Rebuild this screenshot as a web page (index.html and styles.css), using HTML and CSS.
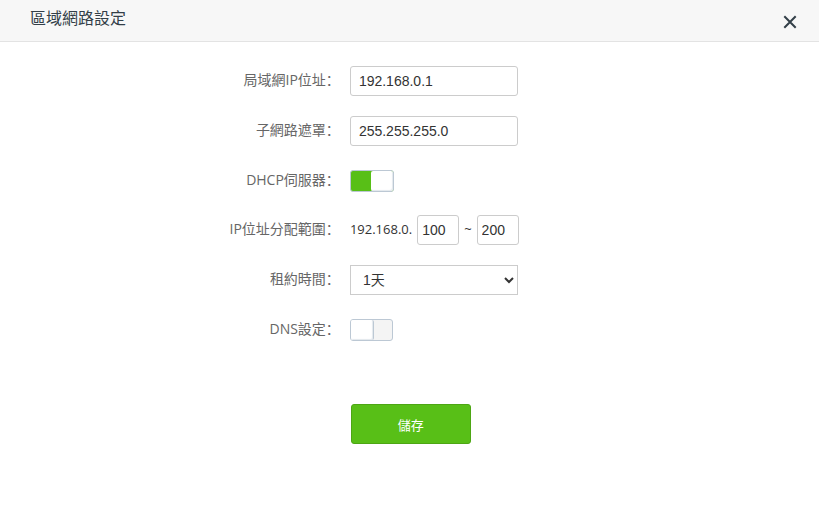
FILE: index.html
```html
<!DOCTYPE html>
<html lang="zh-Hant">
<head>
<meta charset="utf-8">
<meta name="viewport" content="width=device-width, initial-scale=1">
<title>區域網路設定</title>
<link rel="stylesheet" href="styles.css">
</head>
<body>
<header class="dialog-header">
  <h1 class="dialog-title">區域網路設定</h1>
  <button class="close" type="button" aria-label="關閉">
    <svg class="close-icon" viewBox="0 0 14 14" aria-hidden="true"><path d="M1.3 1.3 12.7 12.7M12.7 1.3 1.3 12.7"/></svg>
  </button>
</header>
<form class="settings" lang="zh-Hans">
  <div class="row">
    <label class="label" for="lan-ip">局域網IP位址：</label>
    <div class="control"><input class="text" id="lan-ip" type="text" value="192.168.0.1"></div>
  </div>
  <div class="row">
    <label class="label" for="mask">子網路遮罩：</label>
    <div class="control"><input class="text" id="mask" type="text" value="255.255.255.0"></div>
  </div>
  <div class="row row-switch">
    <label class="label" for="dhcp">DHCP伺服器：</label>
    <div class="control"><input class="switch" id="dhcp" type="checkbox" checked></div>
  </div>
  <div class="row">
    <label class="label" for="pool-start">IP位址分配範圍：</label>
    <div class="control range">
      <span class="prefix">192.168.0.</span>
      <input class="text short" id="pool-start" type="text" value="100">
      <span class="prefix">~</span>
      <input class="text short" id="pool-end" type="text" value="200" aria-label="IP位址分配範圍">
    </div>
  </div>
  <div class="row">
    <label class="label" for="lease">租約時間：</label>
    <div class="control"><select class="select" id="lease"><option>1天</option></select></div>
  </div>
  <div class="row row-switch">
    <label class="label" for="dns">DNS設定：</label>
    <div class="control"><input class="switch" id="dns" type="checkbox"></div>
  </div>
  <div class="actions"><button class="save" type="button">儲存</button></div>
</form>
</body>
</html>
```
FILE: styles.css
```css
* { box-sizing: border-box; }

body {
  margin: 0;
  background: #fff;
  color: #333;
  font: 14px/20px "Open Sans", "Noto Sans CJK SC", sans-serif;
}

.dialog-header {
  display: flex;
  justify-content: space-between;
  height: 42px;
  padding: 0 20px 0 30px;
  background: #f7f7f7;
  border-bottom: 1px solid #e3e3e3;
}

.dialog-title {
  margin: 0;
  color: #333f48;
  font-size: 16px;
  font-weight: 400;
  line-height: 36px;
}

.close {
  display: flex;
  align-items: center;
  margin: 3px 0 0;
  padding: 0 2px;
  border: 0;
  background: none;
}

.close-icon {
  width: 14px;
  height: 14px;
  fill: none;
  stroke: #333f48;
  stroke-width: 2;
}

.settings {
  display: grid;
  gap: 20px;
  padding-top: 24px;
}

.row {
  display: grid;
  grid-template-columns: 41.5% auto;
  column-gap: 10px;
  align-items: center;
  min-height: 30px;
}

.row-switch { min-height: 29px; }

.label {
  padding-bottom: 2px;
  color: #666;
  text-align: right;
}

.control {
  display: flex;
  align-items: center;
}

.range { gap: 5px; }

.prefix {
  padding-bottom: 2px;
  font-size: 13px;
}

.text,
.select {
  width: 168px;
  height: 30px;
  margin: 0;
  border: 1px solid #ccc;
  background: #fff;
  color: #333;
  font: 14px "Liberation Sans", "Noto Sans CJK SC", sans-serif;
}

.text {
  padding: 0 8px;
  border-radius: 3px;
}

.short {
  width: 42px;
  padding: 0 4px;
}

.select {
  padding: 0 0 0 8px;
  border-radius: 0;
}

.switch {
  appearance: none;
  display: flex;
  width: 43px;
  height: 22px;
  margin: 0;
  border: 1px solid #bcc8d4;
  border-radius: 3px;
  background: #f4f4f4;
}

.switch::before {
  content: "";
  width: 22px;
  border-right: 1px solid #bcc8d4;
  border-radius: 2px;
  background: #fff;
  box-shadow: inset -1px -1px 1px #e3e8ed;
}

.switch:checked {
  justify-content: flex-end;
  width: 44px;
  background: #58bf17;
}

.switch:checked::before {
  border-right: 0;
}

.actions {
  margin-top: 40px;
  padding-left: calc(41.5% + 11px);
}

.save {
  display: block;
  width: 120px;
  height: 40px;
  padding: 0;
  border: 1px solid #4da614;
  border-radius: 3px;
  background: #58bf17;
  color: #fff;
  font: 13px "Open Sans", "Noto Sans CJK TC", sans-serif;
}
```
